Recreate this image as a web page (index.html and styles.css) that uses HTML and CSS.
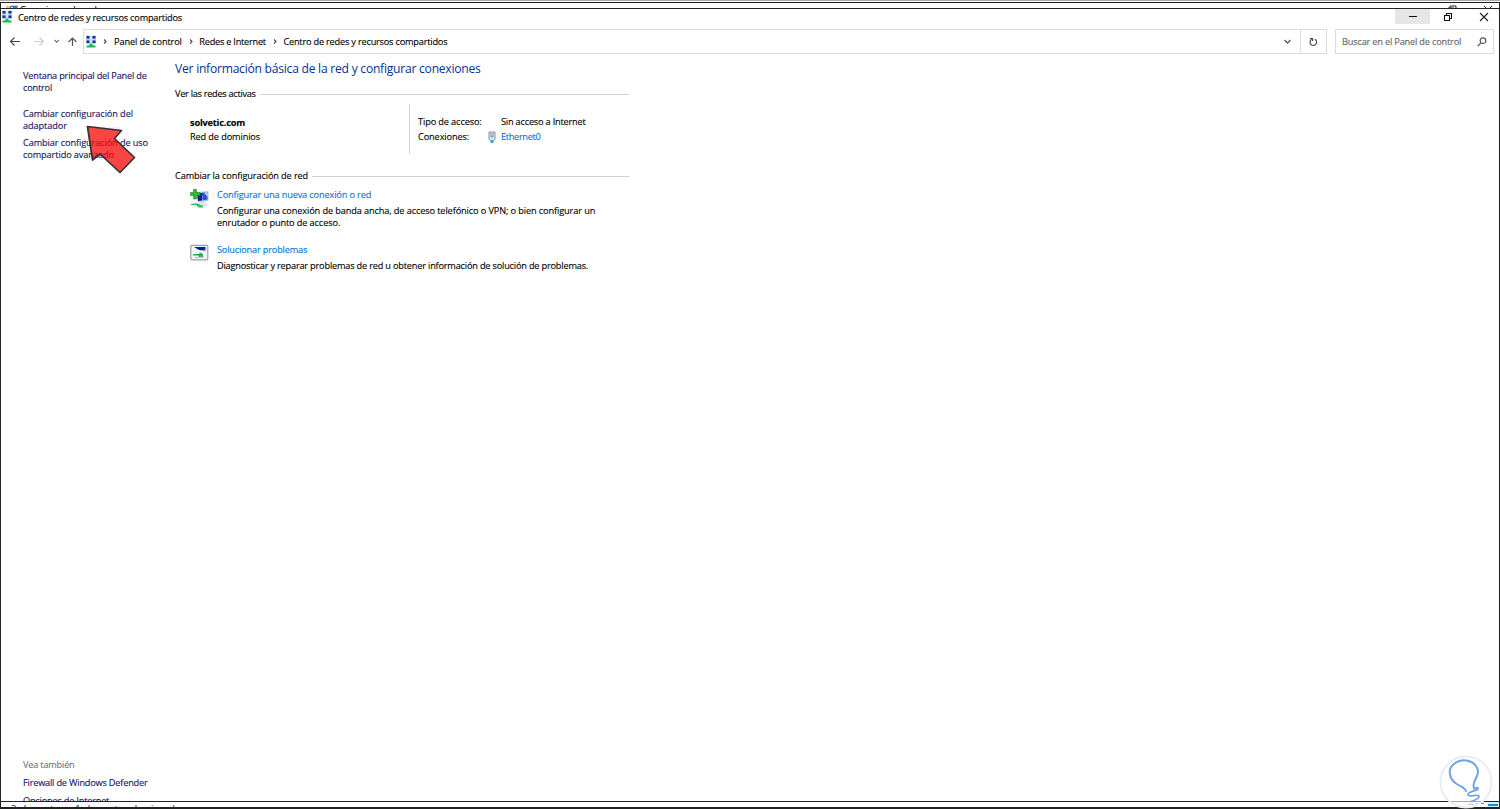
FILE: index.html
```html
<!DOCTYPE html>
<html lang="es">
<head>
<meta charset="utf-8">
<title>Centro de redes y recursos compartidos</title>
<link rel="stylesheet" href="styles.css">
</head>
<body>
<svg class="defs" width="0" height="0">
  <symbol id="net" viewBox="0 0 12 13">
    <path d="M1 .5h4.500v4.500H1zM6.500 .5H11v4.500H6.500zM1 5h4.500v4H1zM6.500 5H11v4H6.500z" fill="#bfd0ea"/>
    <path d="M1.500 1h3v2.500h-3zM7.500 1h3v2.500h-3zM1.500 5.500h3V8h-3zM7.500 5.500h3V8h-3z" fill="#1230a0"/>
    <path d="M6 8l2.400 2.500H10.500V12.500H1.500v-2h2.100z" fill="#19bd50"/>
  </symbol>
  <symbol id="chev" viewBox="0 0 5 7"><path d="M1 1.500l2 2-2 2" fill="none" stroke="#444" stroke-width="1.100"/></symbol>
</svg>
<div class="screen">
  <div class="window back">
    <div class="back-title">
      <svg width="12" height="13" viewBox="0 0 12 13"><path d="M0 2h5V1h7v8H0z" fill="#efc668"/><path d="M4 2h7v6H4z" fill="#3d77bd"/><path d="M5 3h2v2H5z" fill="#dbeafb"/></svg>
      <span>Conexiones de red</span>
      <svg class="back-controls" width="90" height="12" viewBox="0 0 90 12"><path d="M44 4V2h6v6h-2M42 4h6v6h-6zM78 2l8 8M86 2l-8 8" fill="none" stroke="#222"/></svg>
    </div>
    <div class="back-status"><span>3 elementos</span><span>1 elemento seleccionado</span>
      <svg width="32" height="6" viewBox="0 0 32 6"><path d="M1 2.500h6M9 1.500h3M14 1.500h3" stroke="#777"/><path d="M20 0h11v6H20z" fill="#d8efff"/><path d="M21 3h10" stroke="#168fe0" stroke-width="2"/></svg>
    </div>
  </div>
  <div class="window front">
    <header class="titlebar">
      <svg class="net" width="12" height="13"><use href="#net"/></svg>
      <span class="title">Centro de redes y recursos compartidos</span>
      <div class="controls">
        <span class="min"><svg width="10" height="9" viewBox="0 0 10 9"><path d="M1 4.500h8" stroke="#111" stroke-width="1"/></svg></span>
        <svg class="restore" width="10" height="10" viewBox="0 0 10 10"><path d="M1.500 3.500h5v5h-5zM3.500 3V1.500h5v5H7" fill="none" stroke="#111" stroke-width="1.100"/></svg>
        <svg width="10" height="10" viewBox="0 0 10 10"><path d="M1 1l8 8M9 1L1 9" stroke="#222" stroke-width="1.100"/></svg>
      </div>
    </header>
    <nav class="navbar">
      <svg class="arrows" width="82" height="24" viewBox="0 0 82 24" fill="none">
        <path d="M9.500 12.500H19M13.500 8.500l-4 4 4 4" stroke="#444" stroke-width="1.100"/>
        <path d="M33 12.500h9.500M38.500 8.500l4 4-4 4" stroke="#ccc" stroke-width="1.100"/>
        <path d="M53.500 11l2.200 2.200 2.200-2.200" stroke="#777" stroke-width="1.100"/>
        <path d="M71.500 17V9M67.500 13l4-4 4 4" stroke="#555" stroke-width="1.200"/>
      </svg>
      <div class="address">
        <svg class="net" width="12" height="13"><use href="#net"/></svg>
        <svg class="sep first" width="5" height="7"><use href="#chev"/></svg>
        <span class="c1">Panel de control</span>
        <svg class="sep" width="5" height="7"><use href="#chev"/></svg>
        <span class="c2">Redes e Internet</span>
        <svg class="sep" width="5" height="7"><use href="#chev"/></svg>
        <span class="c3">Centro de redes y recursos compartidos</span>
        <svg class="drop" width="9" height="7" viewBox="0 0 9 7"><path d="M1.500 2l3 3 3-3" fill="none" stroke="#555" stroke-width="1.300"/></svg>
        <span class="refresh"><svg width="9" height="10" viewBox="0 0 9 10"><path d="M5.800 2.200a3.300 3.300 0 1 1-3.200.1M1 1.500h2.500V4" fill="none" stroke="#444" stroke-width="1.100"/></svg></span>
      </div>
      <div class="search"><span>Buscar en el Panel de control</span>
        <svg width="10" height="10" viewBox="0 0 10 10" fill="none" stroke="#555" stroke-width="1.200"><circle cx="6" cy="3.700" r="2.800"/><path d="M4 5.800L.8 9"/></svg>
      </div>
    </nav>
    <div class="body">
      <aside>
        <a class="s1">Ventana principal del Panel de<br>control</a>
        <a class="s2">Cambiar configuración del<br>adaptador</a>
        <a class="s3">Cambiar configuración de uso<br>compartido avanzado</a>
        <div class="also">
          <span>Vea también</span>
          <a>Firewall de Windows Defender</a>
          <a>Opciones de Internet</a>
        </div>
      </aside>
      <main>
        <h1>Ver información básica de la red y configurar conexiones</h1>
        <h2 class="h-net"><span>Ver las redes activas</span></h2>
        <section class="network">
          <div class="domain"><b>solvetic.com</b><span>Red de dominios</span></div>
          <dl>
            <dt>Tipo de acceso:</dt><dd class="access">Sin acceso a Internet</dd>
            <dt>Conexiones:</dt>
            <dd class="eth"><svg width="8" height="13" viewBox="0 0 8 13"><path d="M1 1h6v7L5.500 9.500h-3L1 8z" fill="#dce9f3" stroke="#7893ab"/><path d="M3 2v4h2V2" fill="none" stroke="#657b90" stroke-width=".8"/><path d="M2.500 9.500h3V12h-3z" fill="#22a5e8"/></svg><a>Ethernet0</a></dd>
          </dl>
        </section>
        <h2 class="h-conf"><span>Cambiar la configuración de red</span></h2>
        <section class="task">
          <svg width="19" height="20" viewBox="0 0 19 20">
            <path d="M6 3l12.500-1v10L8 13.500z" fill="#b9cbe3"/><path d="M7 4h5v7.500l-4 .5z" fill="#0a1f9c"/><path d="M12 3.500h5.500v7l-5 1z" fill="#2c56c0"/><path d="M14 3.500h3.500v4.500z" fill="#c9e2ff"/>
            <path d="M2 14.500l13-2 2.500 4.500-9 1.500z" fill="#dce3e6"/><path d="M7 14.500l6 2.500v1.500H9L6 16H1v-1z" fill="#26bd55"/>
            <path d="M3.500.5h3v3H10v3H6.500V10h-3V6.500H.5v-3h3z" fill="#2dbb27" stroke="#0e8b24" stroke-width=".6"/>
          </svg>
          <div><a>Configurar una nueva conexión o red</a><p>Configurar una conexión de banda ancha, de acceso telefónico o VPN; o bien configurar un<br>enrutador o punto de acceso.</p></div>
        </section>
        <section class="task second">
          <svg width="19" height="17" viewBox="0 0 19 17">
            <rect x=".8" y="1.300" width="17" height="14.500" rx="1" fill="#f3f5f8" stroke="#98a0ab" stroke-width="1.200"/>
            <path d="M4 3h11.500v3.500L9 6z" fill="#0719a0"/><path d="M10 6.500l5.500-1-.5 2z" fill="#83a8df"/>
            <path d="M3 10h6l1-1.500 3 1.500v3.500L9 13l-1-1.500H3z" fill="#20b54a"/><path d="M5 13.500l9-.5" stroke="#aebac1"/>
          </svg>
          <div><a class="sol">Solucionar problemas</a><p class="diag">Diagnosticar y reparar problemas de red u obtener información de solución de problemas.</p></div>
        </section>
      </main>
    </div>
  </div>
  <svg class="pointer" width="56" height="56" viewBox="0 0 56 56">
    <path d="M5 6L39 7l-7 9 20 19-16 17-20-18-6 6z" fill="#999" opacity=".12"/>
    <path d="M6.500 6.500l34 4-7 8L53.500 37.500 39 52.500 19 34l-7.500 6z" fill="#ff0000" fill-opacity=".72" stroke="#333" stroke-width="1.700" stroke-linejoin="round"/>
  </svg>
  <svg class="bulb" width="58" height="56" viewBox="0 0 58 56" fill="none">
    <circle cx="28" cy="28" r="25.500" fill="#fff" fill-opacity=".6" stroke="#e7edf7" stroke-width="2"/>
    <path d="M28 37c-1-3.500-4-4-8.500-6.500C11 25.500 9 15 16 10c7-6 18-4 22 2 5 7-1 12-2 17-1 3-.5 4 0 5" stroke="#72a4df" stroke-width="2" stroke-linecap="round"/>
    <path d="M36 34.500c3-1 5-.5 4 .5-3 2.500-10 2.500-10 5.500 0 3.500 10-1 11 1.500 .5 2-5 4.500-8 5.500" stroke="#72a4df" stroke-width="1.800" stroke-linecap="round"/>
  </svg>
</div>
</body>
</html>
```
FILE: styles.css
```css
* { box-sizing: border-box; }
body { margin: 0; background: #fff; font: 9.2px/12px "Open Sans", "Noto Sans", sans-serif; color: #000; white-space: nowrap; letter-spacing: -.2px; -webkit-text-stroke: .12px currentColor; }
.defs { position: absolute; }
.screen { position: relative; width: 1500px; height: 810px; overflow: hidden; border-top: 1px solid #aaa; }
.window { position: absolute; left: 0; width: 1500px; background: #fff; border: 1px solid #222; overflow: hidden; }
.back { top: 1px; height: 807px; display: flex; flex-direction: column; justify-content: space-between; border-width: 1px 1px 2px; }
.back-title { display: flex; height: 14px; padding: 1px 3px 0 5px; gap: 2px; letter-spacing: -.2px; }
.back-controls { margin-left: auto; }
.back-status { display: flex; height: 5px; gap: 12px; padding-left: 10px; color: #1b315f; line-height: 13px; letter-spacing: -.05px; overflow: hidden; }
.back-status svg { margin-left: auto; }
.front { top: 7px; height: 794px; display: flex; flex-direction: column; }
.titlebar { display: flex; height: 20px; align-items: flex-start; flex: none; }
.titlebar .net { margin: 1px 5px 0 0; }
.title { padding-top: 3px; }
.controls { margin-left: auto; display: flex; align-items: center; height: 15px; padding-right: 10px; }
.min { width: 35px; height: 15px; background: #e6e6e6; display: grid; place-items: center; margin-right: 13px; }
.restore { margin-right: 26px; }
.navbar { display: flex; height: 25px; flex: none; }
.address { width: 1244px; height: 25px; border: 1px solid #dcdcdc; display: flex; align-items: center; padding-left: 1px; }
.address .net { margin-top: -1px; }
.sep { margin: 0 5.500px 0 7px; }
.sep.first { margin-left: 6px; margin-right: 6px; }
.c1 { letter-spacing: -.12px; }
.c2 { letter-spacing: -.24px; }
.drop { margin-left: auto; margin-right: 8px; }
.refresh { border-left: 1px solid #dcdcdc; width: 26px; height: 23px; display: grid; place-items: center; }
.search { margin-left: 8px; width: 159px; height: 25px; border: 1px solid #dcdcdc; display: flex; align-items: center; justify-content: space-between; padding: 0 6px; color: #666; letter-spacing: -.18px; }
.body { display: flex; flex: 1; min-height: 0; }
aside { width: 174px; padding: 16px 0 0 22px; color: #15155e; display: flex; flex-direction: column; }
.s2 { margin-top: 14px; letter-spacing: -.1px; }
.s3 { margin-top: 5px; letter-spacing: -.11px; }
.also { margin-top: auto; height: 42px; display: flex; flex-direction: column; gap: 6px; }
.also span { color: #777; }
main { width: 454px; padding-top: 7px; }
h1, h2, p, dl, dd { margin: 0; font-weight: normal; }
h1 { font-size: 12.100px; line-height: 16px; color: #003399; letter-spacing: -.24px; -webkit-text-stroke: 0; }
h2 { font-size: inherit; display: flex; align-items: center; gap: 4px; }
h2::after { content: ""; height: 1px; flex: 1; background: #d0d2d4; margin-top: 1px; }
.h-net { margin-top: 11px; letter-spacing: -.28px; }
.network { display: flex; height: 50px; margin-top: 4px; }
.domain { width: 235px; padding: 13px 0 0 15px; border-right: 1px solid #d0d2d4; display: flex; flex-direction: column; gap: 2px; letter-spacing: -.12px; }
.domain b { letter-spacing: -.18px; }
dl { display: grid; grid-template-columns: 83px 110px; grid-template-rows: 12px 12px; row-gap: 3px; padding: 12px 0 0 8px; }
dt { letter-spacing: -.12px; }
.eth { display: flex; margin-left: -13px; gap: 5px; color: #0078d7; letter-spacing: -.32px; }
.h-conf { margin-top: 16px; letter-spacing: -.12px; }
.task { display: flex; padding-left: 15px; gap: 8px; margin-top: 7px; }
.task > svg { flex: none; }
.task a { display: block; color: #0078d7; letter-spacing: -.14px; }
.task p { margin-top: 4px; letter-spacing: -.115px; }
.task .sol { letter-spacing: -.17px; }
.task .diag { letter-spacing: -.19px; }
.second { margin-top: 15px; }
.pointer { position: absolute; left: 81px; top: 119px; }
.bulb { position: absolute; left: 1438px; top: 753px; }
```
